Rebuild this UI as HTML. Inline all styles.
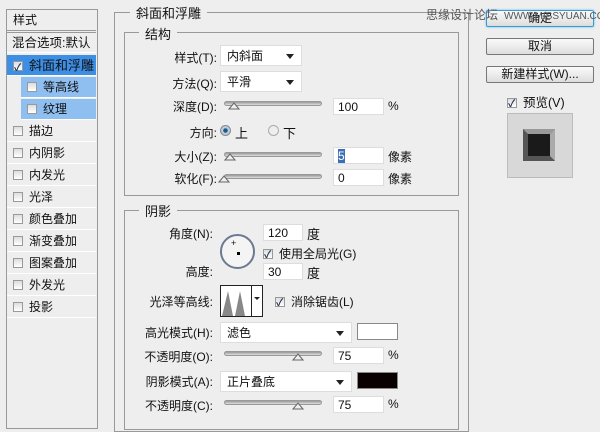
<!DOCTYPE html><html><head><meta charset="utf-8"><style>
*{margin:0;padding:0;box-sizing:border-box}
body{width:600px;height:424px;background:#eeeeee;position:relative;overflow:hidden;font-family:"Liberation Sans","Noto Sans CJK SC",sans-serif;font-size:12px;color:#111}
.a{position:absolute;white-space:nowrap}
.row{position:absolute;left:7px;width:89px;height:21px;border-bottom:1px solid #fff;line-height:21px;padding-left:6px}
.cb{display:inline-block;width:10px;height:10px;border:1px solid #999;background:linear-gradient(#ddd,#fff);vertical-align:-1px;margin-right:6px;position:relative}
.cb.on::after{content:"✓";position:absolute;left:0;top:-4px;font-size:10px;color:#235;font-weight:bold}
.box{position:absolute;border:1px solid #999}
.lg{position:absolute;background:#eee;padding:0 6px;font-size:13px}
.dd{position:absolute;background:#fff;border:1px solid #ddd;height:21px;line-height:20px;padding-left:6px}
.dd::after{content:"";position:absolute;right:7px;top:8px;border:4px solid transparent;border-top:5px solid #222}
.sl{position:absolute;height:5px;border-radius:3px;background:linear-gradient(#999,#ddd);border:1px solid #999}
.th{position:absolute;width:10px;height:8px;top:0}
.in{position:absolute;background:#fff;border:1px solid #ddd;height:17px;line-height:16px;padding-left:4px}
.lb{position:absolute;text-align:right;width:110px}
.btn{position:absolute;left:486px;width:108px;height:17px;border:1px solid #777;border-radius:2px;background:linear-gradient(#fafafa,#ddd);text-align:center;line-height:15px;font-size:12px}
</style></head><body>
<div class="box" style="left:6px;top:9px;width:92px;height:420px;background:#eeeeee"></div>
<div class="a" style="left:7px;top:10px;width:89px;height:21px;border-bottom:1px solid #999;padding-left:6px;line-height:20px;font-size:12px">样式</div>
<div class="row" style="top:32px;border-top:1px solid #999;font-size:12.5px;padding-left:5px">混合选项:默认</div>
<div class="row" style="top:55px;background:#3d8fe6;color:#111;font-size:13px"><span class="cb on"></span>斜面和浮雕</div>
<div class="row" style="top:77px;left:21px;width:75px;background:#8fbff0"><span class="cb"></span>等高线</div>
<div class="row" style="top:99px;left:21px;width:75px;background:#8fbff0"><span class="cb"></span>纹理</div>
<div class="row" style="top:121px"><span class="cb"></span>描边</div>
<div class="row" style="top:143px"><span class="cb"></span>内阴影</div>
<div class="row" style="top:165px"><span class="cb"></span>内发光</div>
<div class="row" style="top:187px"><span class="cb"></span>光泽</div>
<div class="row" style="top:209px"><span class="cb"></span>颜色叠加</div>
<div class="row" style="top:231px"><span class="cb"></span>渐变叠加</div>
<div class="row" style="top:253px"><span class="cb"></span>图案叠加</div>
<div class="row" style="top:275px"><span class="cb"></span>外发光</div>
<div class="row" style="top:297px"><span class="cb"></span>投影</div>

<div class="box" style="left:114px;top:12px;width:355px;height:420px"></div>
<div class="lg" style="left:130px;top:3px">斜面和浮雕</div>
<div class="box" style="left:124px;top:32px;width:335px;height:164px"></div>
<div class="lg" style="left:139px;top:24px">结构</div>
<div class="lb" style="left:107px;top:49px">样式(T):</div><div class="dd" style="left:220px;top:45px;width:82px">内斜面</div>
<div class="lb" style="left:107px;top:75px">方法(Q):</div><div class="dd" style="left:220px;top:71px;width:82px">平滑</div>
<div class="lb" style="left:107px;top:98px">深度(D):</div>
<div class="sl" style="left:224px;top:101px;width:98px"></div>
<svg class="a" style="left:228px;top:101px" width="12" height="9"><path d="M1 8 L6 2 L11 8Z" fill="#eee" stroke="#666"/></svg>
<div class="in" style="left:333px;top:98px;width:51px">100</div><div class="a" style="left:388px;top:99px">%</div>
<div class="lb" style="left:107px;top:124px">方向:</div>
<div class="a" style="left:220px;top:125px;width:11px;height:11px;border-radius:50%;border:1px solid #888;background:radial-gradient(#1a5a8a 30%,#bcd 40%)"></div><div class="a" style="left:235px;top:123px;font-size:13px">上</div>
<div class="a" style="left:268px;top:125px;width:11px;height:11px;border-radius:50%;border:1px solid #aaa;background:#eee"></div><div class="a" style="left:283px;top:123px;font-size:13px">下</div>
<div class="lb" style="left:107px;top:148px">大小(Z):</div>
<div class="sl" style="left:224px;top:152px;width:98px"></div>
<svg class="a" style="left:224px;top:152px" width="12" height="9"><path d="M1 8 L6 2 L11 8Z" fill="#eee" stroke="#666"/></svg>
<div class="in" style="left:333px;top:147px;width:51px"><span style="background:#3a6fb8;color:#fff">5</span></div><div class="a" style="left:388px;top:148px">像素</div>
<div class="lb" style="left:107px;top:170px">软化(F):</div>
<div class="sl" style="left:224px;top:174px;width:98px"></div>
<svg class="a" style="left:218px;top:174px" width="12" height="9"><path d="M1 8 L6 2 L11 8Z" fill="#eee" stroke="#666"/></svg>
<div class="in" style="left:333px;top:169px;width:51px">0</div><div class="a" style="left:388px;top:170px">像素</div>

<div class="box" style="left:124px;top:210px;width:335px;height:220px"></div>
<div class="lg" style="left:139px;top:201px">阴影</div>
<div class="lb" style="left:103px;top:225px">角度(N):</div>
<div class="a" style="left:220px;top:234px;width:35px;height:35px;border-radius:50%;border:2px solid #6a7a90;background:#f4f4f4"></div>
<div class="a" style="left:237px;top:252px;width:3px;height:3px;background:#000"></div>
<div class="a" style="left:231px;top:238px;font-size:9px">+</div>
<div class="in" style="left:263px;top:224px;width:40px">120</div><div class="a" style="left:307px;top:224px;font-size:13px">度</div>
<div class="a" style="left:263px;top:245px"><span class="cb on"></span>使用全局光(G)</div>
<div class="lb" style="left:103px;top:263px">高度:</div>
<div class="in" style="left:263px;top:263px;width:40px">30</div><div class="a" style="left:307px;top:263px;font-size:13px">度</div>
<div class="lb" style="left:103px;top:293px">光泽等高线:</div>
<svg class="a" style="left:220px;top:285px" width="43" height="32"><rect x=".5" y=".5" width="42" height="31" fill="#fff" stroke="#222"/><path d="M2 31 L8 6 L13 31 L15 31 L20 6 L25 31Z" fill="#888"/><line x1="31.5" y1="0" x2="31.5" y2="32" stroke="#222"/><path d="M34 12 L40 12 L37 15Z" fill="#222"/></svg>
<div class="a" style="left:275px;top:293px"><span class="cb on"></span>消除锯齿(L)</div>
<div class="lb" style="left:103px;top:324px">高光模式(H):</div>
<div class="dd" style="left:220px;top:322px;width:132px">滤色</div>
<div class="a" style="left:357px;top:323px;width:41px;height:17px;background:#fff;border:1px solid #888"></div>
<div class="lb" style="left:103px;top:348px">不透明度(O):</div>
<div class="sl" style="left:224px;top:351px;width:98px"></div>
<svg class="a" style="left:292px;top:352px" width="12" height="9"><path d="M1 8 L6 2 L11 8Z" fill="#eee" stroke="#666"/></svg>
<div class="in" style="left:333px;top:347px;width:51px">75</div><div class="a" style="left:388px;top:348px">%</div>
<div class="lb" style="left:103px;top:373px">阴影模式(A):</div>
<div class="dd" style="left:220px;top:371px;width:132px">正片叠底</div>
<div class="a" style="left:357px;top:372px;width:41px;height:17px;background:#0a0000;border:1px solid #888"></div>
<div class="lb" style="left:103px;top:397px">不透明度(C):</div>
<div class="sl" style="left:224px;top:400px;width:98px"></div>
<svg class="a" style="left:292px;top:401px" width="12" height="9"><path d="M1 8 L6 2 L11 8Z" fill="#eee" stroke="#666"/></svg>
<div class="in" style="left:333px;top:396px;width:51px">75</div><div class="a" style="left:388px;top:397px">%</div>

<div class="btn" style="top:10px;border-color:#3a9ad0;box-shadow:0 0 2px #5bc0f0">确定</div>
<div class="a" style="left:426px;top:6px;color:#555;font-size:12px">思缘设计论坛</div>
<div class="a" style="left:504px;top:11px;color:#555;font-size:10px">WWW.MISSYUAN.COM</div>
<div class="btn" style="top:38px">取消</div>
<div class="btn" style="top:66px">新建样式(W)...</div>
<div class="a" style="left:507px;top:92px;font-size:12.5px"><span class="cb on"></span>预览(V)</div>
<div class="a" style="left:507px;top:113px;width:66px;height:65px;background:#d8d8d8;border:1px solid #bbb"></div>
<svg class="a" style="left:523px;top:129px" width="34" height="34"><rect x="0" y="0" width="32" height="32" fill="#555"/><path d="M0 0 L32 0 L27 5 L5 5Z" fill="#999"/><path d="M32 0 L32 32 L27 27 L27 5Z" fill="#aaa"/><rect x="5" y="5" width="22" height="22" fill="#1a1a1a"/></svg>
</body></html>
